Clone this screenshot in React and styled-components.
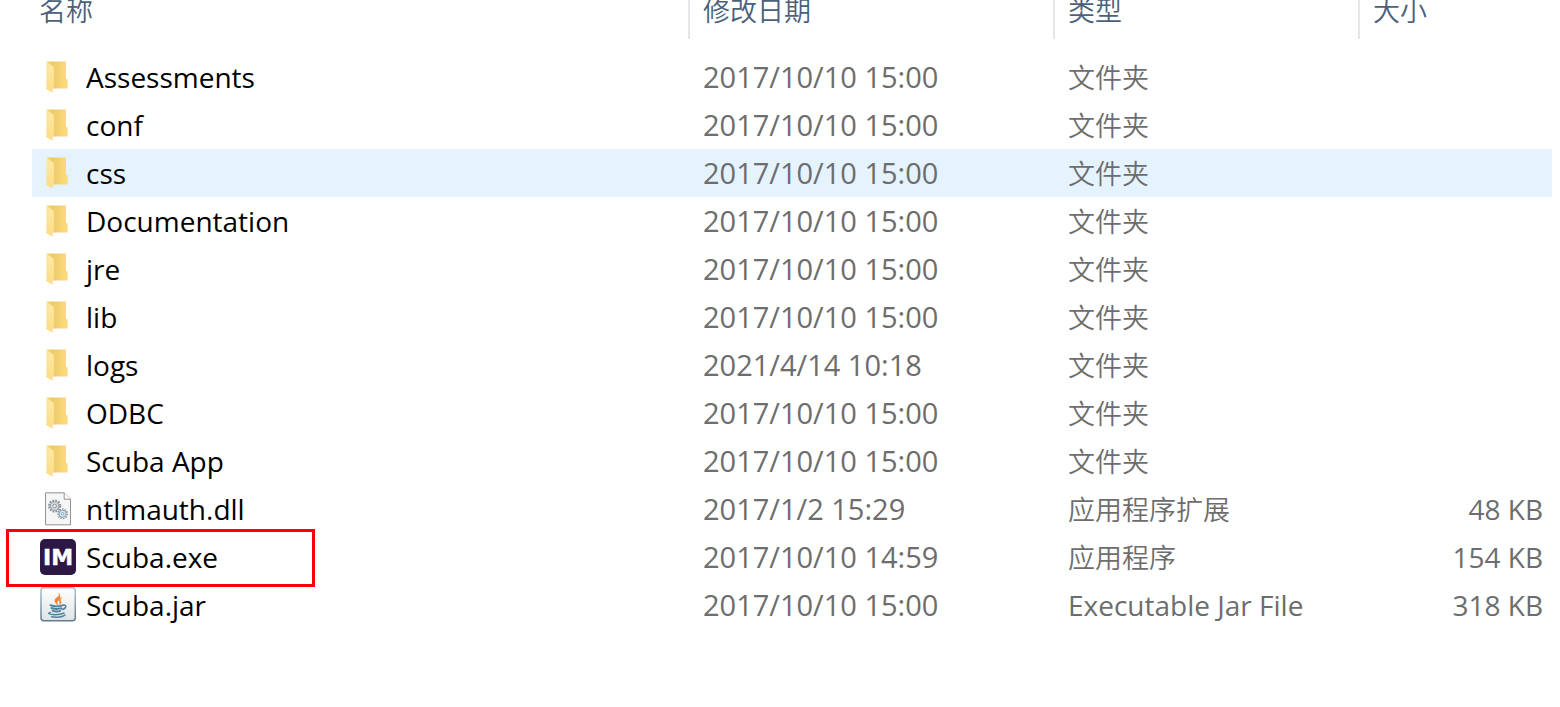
import React from 'react'
import styled, { createGlobalStyle, css } from 'styled-components'

const files = [
  { name: 'Assessments', date: '2017/10/10 15:00', type: '文件夹', icon: 'folder' },
  { name: 'conf', date: '2017/10/10 15:00', type: '文件夹', icon: 'folder' },
  { name: 'css', date: '2017/10/10 15:00', type: '文件夹', icon: 'folder', hovered: true },
  { name: 'Documentation', date: '2017/10/10 15:00', type: '文件夹', icon: 'folder' },
  { name: 'jre', date: '2017/10/10 15:00', type: '文件夹', icon: 'folder' },
  { name: 'lib', date: '2017/10/10 15:00', type: '文件夹', icon: 'folder' },
  { name: 'logs', date: '2021/4/14 10:18', type: '文件夹', icon: 'folder' },
  { name: 'ODBC', date: '2017/10/10 15:00', type: '文件夹', icon: 'folder' },
  { name: 'Scuba App', date: '2017/10/10 15:00', type: '文件夹', icon: 'folder' },
  { name: 'ntlmauth.dll', date: '2017/1/2 15:29', type: '应用程序扩展', size: '48 KB', icon: 'dll' },
  { name: 'Scuba.exe', date: '2017/10/10 14:59', type: '应用程序', size: '154 KB', icon: 'exe', marked: true },
  { name: 'Scuba.jar', date: '2017/10/10 15:00', type: 'Executable Jar File', size: '318 KB', icon: 'jar', latinType: true },
]

const FolderIcon = () => (
  <Icon viewBox="0 0 36 36" aria-hidden="true">
    <defs>
      <linearGradient id="folderBack" x1="0" y1="0" x2="1" y2="0">
        <stop offset="0.3" stopColor="#efcb68" />
        <stop offset="1" stopColor="#fcdc80" />
      </linearGradient>
      <linearGradient id="folderFlap" x1="0" y1="0" x2="0" y2="1">
        <stop offset="0" stopColor="#ffe9a9" />
        <stop offset="1" stopColor="#fbdd86" />
      </linearGradient>
    </defs>
    <path d="M7 2.4h19v17l1.7 1v9.2H7z" fill="url(#folderBack)" />
    <path d="M6.3 2.4l6.2 4.4q1.4 1.2 1.4 3v19.8h-1.2v4.2l-6.4-3.6z" fill="url(#folderFlap)" />
  </Icon>
)

const DllIcon = () => (
  <Icon viewBox="0 0 36 36" aria-hidden="true">
    <path d="M5.5 1.8h18.7l6.3 6.4v25.6h-25z" fill="#f6f6f6" stroke="#929292" />
    <path d="M24.2 1.8v6.400h6.300" fill="#fff" stroke="#929292" />
    <circle cx="14.6" cy="15" r="5.600" fill="none" stroke="#8d959b" strokeWidth="2" strokeDasharray="1.800 1.130" />
    <circle cx="14.6" cy="15" r="4.400" fill="#d5dade" stroke="#8d959b" />
    <circle cx="14.6" cy="15" r="1.800" fill="#f6f6f6" stroke="#8d959b" />
    <circle cx="22.600" cy="22.800" r="4.600" fill="none" stroke="#8da0ae" strokeWidth="1.800" strokeDasharray="1.500 1.060" />
    <circle cx="22.600" cy="22.800" r="3.600" fill="#dce9f2" stroke="#8da0ae" />
    <circle cx="22.600" cy="22.800" r="1.300" fill="#fff" stroke="#6ea4c8" />
  </Icon>
)

const ExeIcon = () => (
  <Icon viewBox="0 0 36 36" aria-hidden="true">
    <rect width="36" height="36" rx="5" fill="#2c1745" />
    <text x="18" y="26" textAnchor="middle" fontFamily="DejaVu Sans, sans-serif" fontWeight="700" fontSize="22" fill="#fff" stroke="#fff" strokeWidth="0.4">IM</text>
  </Icon>
)

const JarIcon = () => (
  <Icon viewBox="0 0 36 36" aria-hidden="true">
    <defs>
      <linearGradient id="jarTile" x1="0" y1="0" x2="0" y2="1">
        <stop offset="0" stopColor="#fff" />
        <stop offset="1" stopColor="#dfe2e5" />
      </linearGradient>
      <linearGradient id="jarEdge" x1="0" y1="0" x2="0" y2="1">
        <stop offset="0" stopColor="#a9c3d5" />
        <stop offset="1" stopColor="#64798a" />
      </linearGradient>
    </defs>
    <rect x="1" y="0.7" width="34.3" height="33" rx="3" fill="url(#jarTile)" stroke="url(#jarEdge)" strokeWidth="1.5" />
    <path d="M18.800 6c2.400 3.200-4.400 4.800-4 7.800.2 1.800 1.800 2.800 2.600 4.400-.2-2.600-.6-3.400 1.200-5 1.800-1.700 1.800-5 .2-7.200z" fill="#ef8636" stroke="#ef8636" strokeWidth="0.500" />
    <path d="M22 10.400c-2.800 1-3.800 2.400-2.600 4 .8 1.200.6 2-.4 3.400 2.200-1.200 2.600-2.400 1.600-3.800-.7-1.300 0-2.400 1.400-3.600z" fill="#ef8636" stroke="#ef8636" strokeWidth="0.500" />
    <path d="M10.400 18.200q5.600 2.200 12.200.2M11.400 21q5 1.800 10 .2M12.600 23.800q4 1.400 7.600 0" fill="none" stroke="#50819f" strokeWidth="1.900" strokeLinecap="round" />
    <path d="M23 18.200c4-1 3.600 3.200-.8 4.200M10.400 25.400c-6 2 7 3.600 13.600.6M11.600 29.800c5 .9 11.400.2 13.400-1.800" fill="none" stroke="#50819f" strokeWidth="1.500" strokeLinecap="round" />
  </Icon>
)

const icons = {
  folder: FolderIcon,
  dll: DllIcon,
  exe: ExeIcon,
  jar: JarIcon,
}

function FileRow ({ file }) {
  const { name, date, type, size, icon, hovered, marked, latinType } = file
  const FileIcon = icons[icon]

  return (
    <Row $hovered={hovered}>
      <NameCell>
        <FileName>
          <FileIcon />
          {name}
        </FileName>
        {marked && <Marker />}
      </NameCell>
      <Cell>{date}</Cell>
      <TypeCell $cjk={!latinType}>{type}</TypeCell>
      <SizeCell>{size}</SizeCell>
    </Row>
  )
}

function App () {
  return (
    <Page>
      <GlobalStyle />
      <FileTable>
        <colgroup>
          <col />
          <Column $width={365} />
          <Column $width={305} />
          <Column $width={194} />
        </colgroup>
        <thead>
          <tr>
            <HeaderCell $first>名称</HeaderCell>
            <HeaderCell>修改日期</HeaderCell>
            <HeaderCell>类型</HeaderCell>
            <HeaderCell>大小</HeaderCell>
          </tr>
        </thead>
        <FileList>
          {files.map(file => <FileRow key={file.name} file={file} />)}
        </FileList>
      </FileTable>
    </Page>
  )
}

export default App

const GlobalStyle = createGlobalStyle`
  body {
    margin: 0;
    background: #fff;
    font-family: "Open Sans", "Noto Sans CJK SC", sans-serif;
  }
`

const cjkText = css`
  font-family: "Noto Sans CJK SC", sans-serif;
  font-size: 27px;
  font-weight: 350;
`

const Page = styled.main`
  padding: 0 8px 0 32px;
`

const FileTable = styled.table`
  width: 100%;
  table-layout: fixed;
  border-collapse: separate;
  border-spacing: 0;
`

const Column = styled.col`
  width: ${p => p.$width}px;
`

const HeaderCell = styled.th`
  ${cjkText}
  box-sizing: border-box;
  height: 39px;
  padding: 0 0 19px ${p => p.$first ? 7 : 13}px;
  border-left: ${p => p.$first ? 0 : '2px solid #e6e6e6'};
  color: #4c607a;
  line-height: 20px;
  text-align: left;
`

const FileList = styled.tbody`
  &::before {
    content: '';
    display: block;
    height: 14px;
  }
`

const Row = styled.tr`
  background: ${p => p.$hovered ? '#e5f3ff' : 'transparent'};
`

const Cell = styled.td`
  height: 48px;
  padding: 0 0 0 15px;
  color: #6d6d6d;
  font-size: 29px;
  line-height: 48px;
  white-space: nowrap;
`

const NameCell = styled(Cell)`
  position: relative;
  padding-left: 8px;
  color: #000;
  font-size: 28px;
`

const TypeCell = styled(Cell)`
  font-size: 28px;
  ${p => p.$cjk && cjkText}
`

const SizeCell = styled(Cell)`
  padding-right: 9px;
  font-size: 28px;
  text-align: right;
`

const FileName = styled.div`
  display: flex;
  align-items: center;
  gap: 10px;
`

const Icon = styled.svg`
  flex: none;
  width: 36px;
  height: 36px;
`

const Marker = styled.div`
  position: absolute;
  top: -4px;
  left: -26px;
  box-sizing: border-box;
  width: 309px;
  height: 58px;
  border: 3px solid #fb0007;
  pointer-events: none;
`
